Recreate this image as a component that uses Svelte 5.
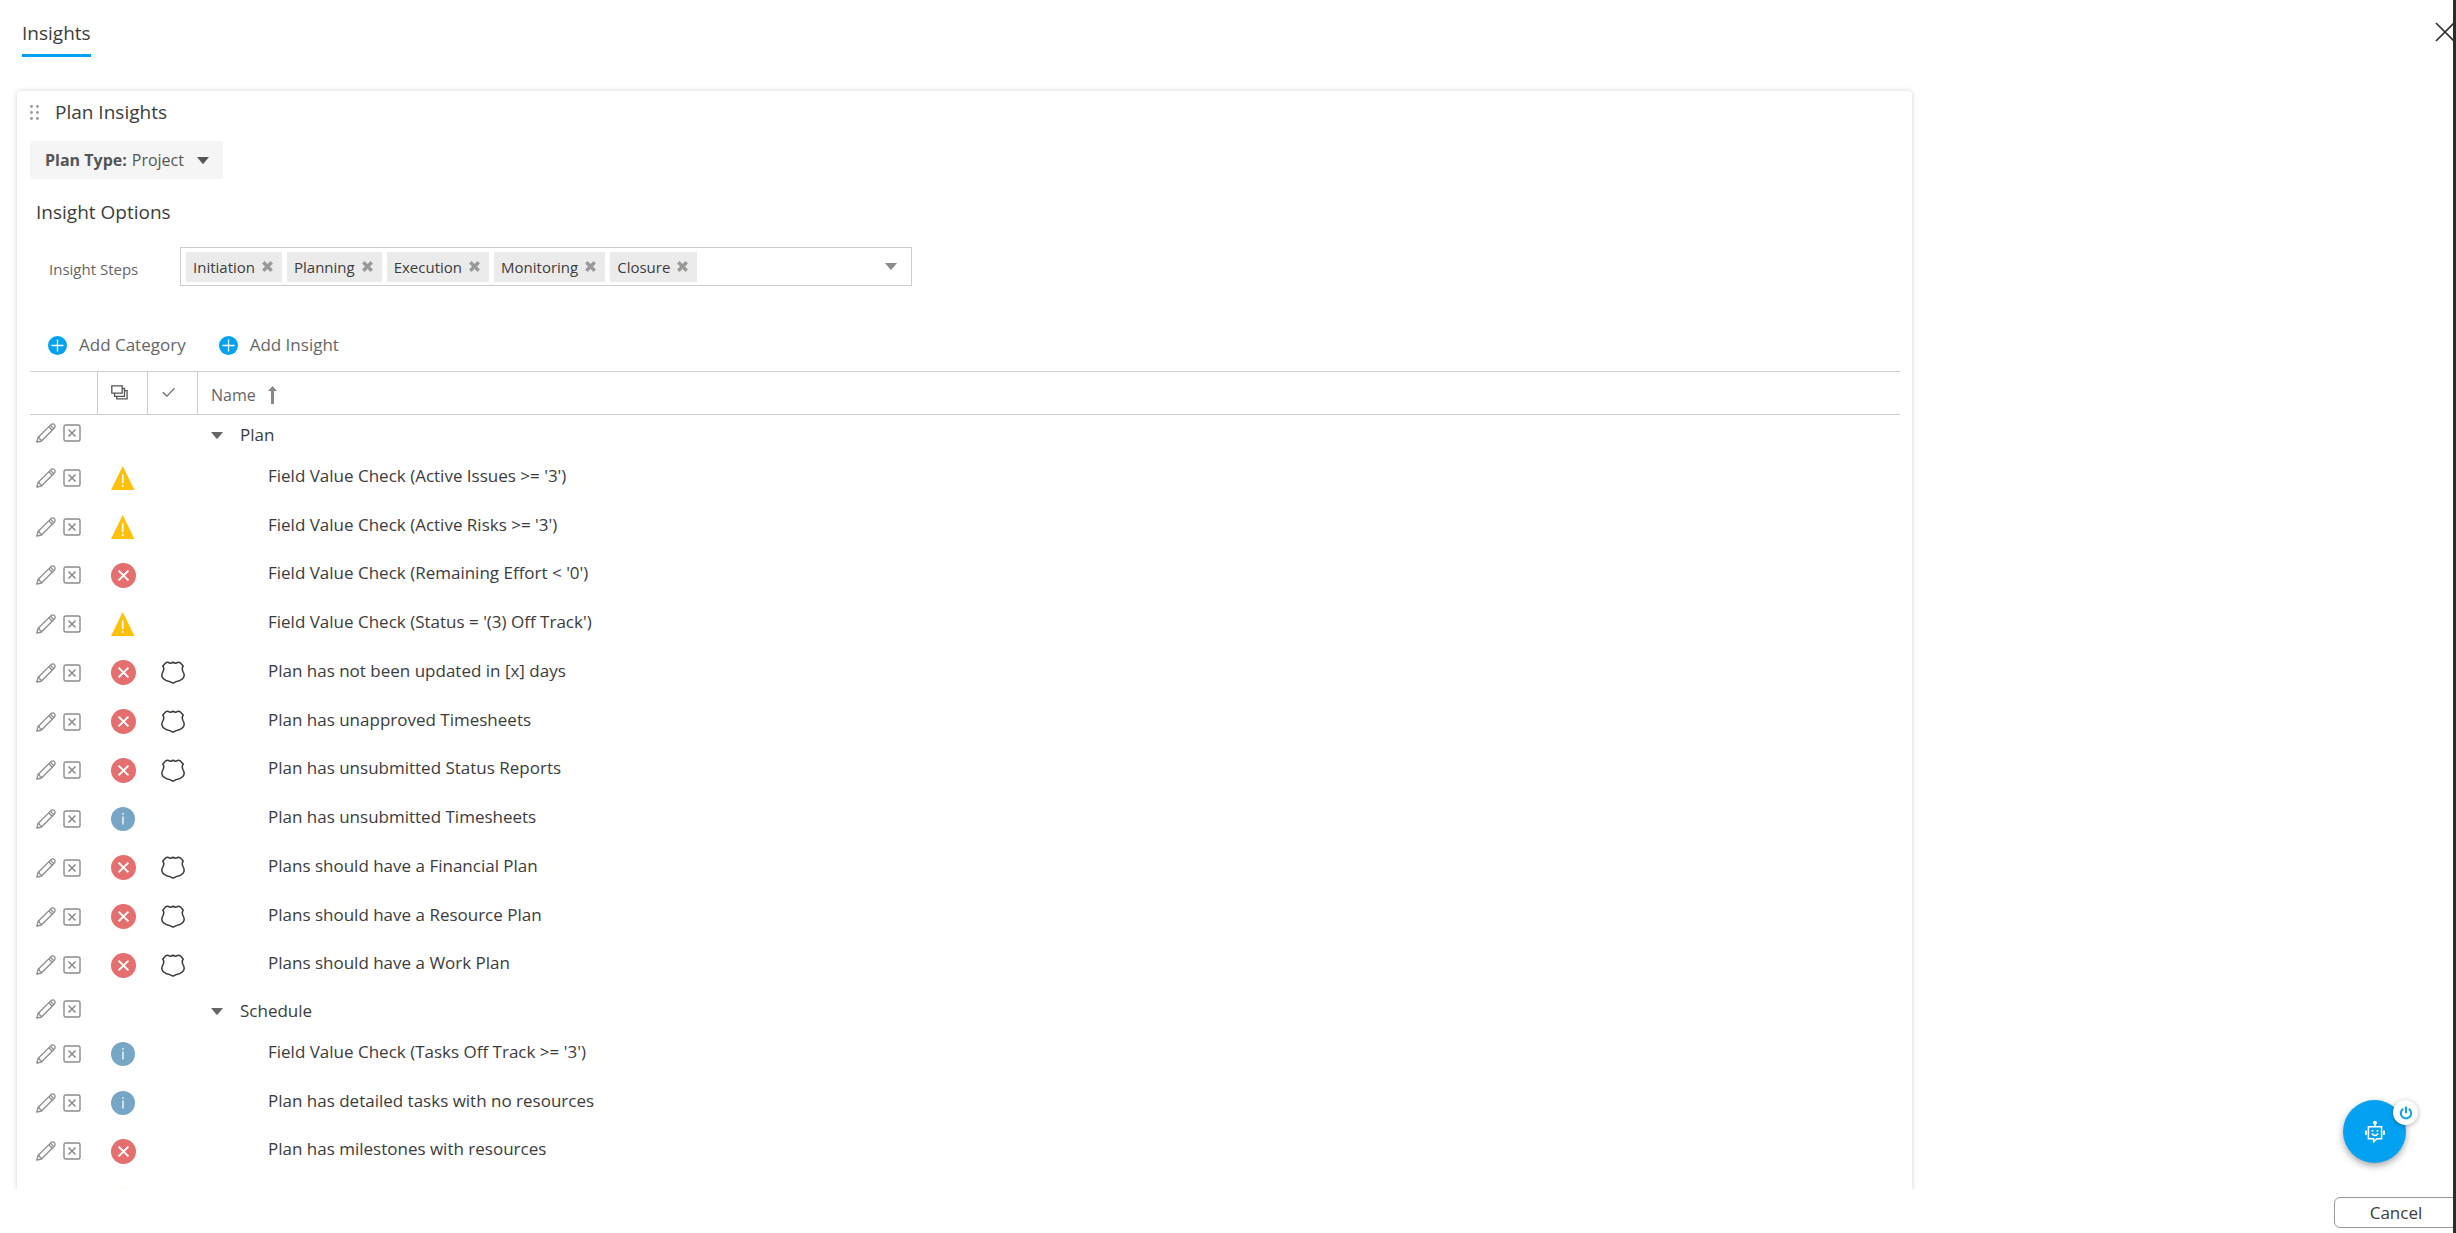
<script>
  let steps = $state(['Initiation', 'Planning', 'Execution', 'Monitoring', 'Closure']);

  const groups = [
    {
      name: 'Plan',
      rows: [
        { name: "Field Value Check (Active Issues >= '3')", level: 'warning' },
        { name: "Field Value Check (Active Risks >= '3')", level: 'warning' },
        { name: "Field Value Check (Remaining Effort < '0')", level: 'error' },
        { name: "Field Value Check (Status = '(3) Off Track')", level: 'warning' },
        { name: 'Plan has not been updated in [x] days', level: 'error', shield: true },
        { name: 'Plan has unapproved Timesheets', level: 'error', shield: true },
        { name: 'Plan has unsubmitted Status Reports', level: 'error', shield: true },
        { name: 'Plan has unsubmitted Timesheets', level: 'info' },
        { name: 'Plans should have a Financial Plan', level: 'error', shield: true },
        { name: 'Plans should have a Resource Plan', level: 'error', shield: true },
        { name: 'Plans should have a Work Plan', level: 'error', shield: true }
      ]
    },
    {
      name: 'Schedule',
      rows: [
        { name: "Field Value Check (Tasks Off Track >= '3')", level: 'info' },
        { name: 'Plan has detailed tasks with no resources', level: 'info' },
        { name: 'Plan has milestones with resources', level: 'error' },
        { name: '', level: 'warning' }
      ]
    }
  ];

  function removeStep(step) {
    steps = steps.filter((s) => s !== step);
  }
</script>

{#snippet plus()}
  <svg class="plus" viewBox="0 0 19 19" width="19" height="19" aria-hidden="true">
    <circle cx="9.5" cy="9.5" r="9.5" fill="#03a1f1" />
    <path d="M9.5 3.5v12M3.5 9.5h12" stroke="#fff" stroke-width="1.3" />
  </svg>
{/snippet}

{#snippet rowActions(name)}
  <div class="actions">
    <button aria-label="Edit {name}">
      <svg viewBox="0 0 20 20" width="20" height="20" fill="none" stroke="#8c8c8c" stroke-width="1.3" stroke-linejoin="round">
        <path d="M.8 19.2 2 14.5 15 1.6Q16.8.2 18.4 1.6 19.8 3.2 18.4 5L5.5 18 .8 19.2Z" />
        <path d="M2 14.5Q3.4 14.4 3.8 16.2 5.4 16.4 5.5 18M12.8 3.8 16.2 7.2M14.4 2.2 17.8 5.6" />
      </svg>
    </button>
    <button aria-label="Delete {name}">
      <svg viewBox="0 0 18 18" width="18" height="18" fill="none" stroke="#8c8c8c">
        <rect x="1" y="1" width="16" height="16" rx="1.8" stroke-width="1.4" />
        <path d="M5.5 5.5l7 7M12.5 5.5l-7 7" stroke-width="1.6" />
      </svg>
    </button>
  </div>
{/snippet}

{#snippet levelIcon(level)}
  {#if level === 'warning'}
    <svg viewBox="0 0 24 24" width="24" height="24" role="img" aria-label="Warning">
      <path d="M11.7 0 23.5 24H0Z" fill="#ffc107" />
      <path d="M11.7 8.5v8.8M11.7 19v2" stroke="#fff" stroke-width="1.6" />
    </svg>
  {:else if level === 'error'}
    <svg viewBox="0 0 25 25" width="25" height="25" role="img" aria-label="Error">
      <circle cx="12.5" cy="12.5" r="12.5" fill="#e56e6e" />
      <path d="M7.6 7.6l9.8 9.8M17.4 7.6l-9.8 9.8" stroke="#fff" stroke-width="2" />
    </svg>
  {:else}
    <svg viewBox="0 0 24 24" width="24" height="24" role="img" aria-label="Information">
      <circle cx="12" cy="12" r="12" fill="#76a5c6" />
      <path d="M12 9.6v8M12 6v1.8" stroke="#fff" stroke-width="1.3" />
    </svg>
  {/if}
{/snippet}

<div class="page">
  <header class="top">
    <nav><a class="tab" href="#insights">Insights</a></nav>
    <button class="close" aria-label="Close">
      <svg viewBox="0 0 20 20" width="20" height="20"><path d="M1 1l18 18M19 1 1 19" stroke="#333" stroke-width="1.7" /></svg>
    </button>
  </header>

  <main>
    <section class="card">
      <div class="title">
        <svg viewBox="0 0 9 15" width="9" height="15" fill="#999" aria-hidden="true">
          {#each [1.5, 7.5] as x}
            {#each [1.5, 7.5, 13.5] as y}<circle cx={x} cy={y} r="1.4" />{/each}
          {/each}
        </svg>
        <h1>Plan Insights</h1>
      </div>

      <label class="plan-type">
        <b>Plan Type:</b>
        <select><option>Project</option></select>
        <svg viewBox="0 0 12 7" width="12" height="7" aria-hidden="true"><path d="M0 0h12L6.6 6.6Q6 7 5.4 6.6Z" fill="#555" /></svg>
      </label>

      <h2>Insight Options</h2>

      <div class="field">
        <label for="steps">Insight Steps</label>
        <div class="picker">
          {#each steps as step}
            <span class="chip">
              {step}
              <button aria-label="Remove {step}" onclick={() => removeStep(step)}>
                <svg viewBox="0 0 11 11" width="11" height="11"><path d="M2.5 2.5l6 6M8.5 2.5l-6 6" stroke="#999" stroke-width="3.4" stroke-linecap="square" /></svg>
              </button>
            </span>
          {/each}
          <input id="steps" type="text" />
          <button class="open" aria-label="Show steps">
            <svg viewBox="0 0 12 7" width="12" height="7"><path d="M0 0h12L6.6 6.6Q6 7 5.4 6.6Z" fill="#8c8c8c" /></svg>
          </button>
        </div>
      </div>

      <div class="tools">
        <button>{@render plus()}Add Category</button>
        <button>{@render plus()}Add Insight</button>
      </div>

      <table>
        <colgroup><col class="c-act" /><col class="c-icon" /><col class="c-icon" /><col /></colgroup>
        <thead>
          <tr>
            <th aria-label="Actions"></th>
            <th aria-label="Severity">
              <svg viewBox="0 0 17 15" width="17" height="15" fill="#fff" stroke="#555" stroke-width="1.3">
                <path d="M5.7 5.7h10.4v8.2H5.7z" />
                <path d="M3.5 3.5h10v7.8h-10z" />
                <path d="M.8.8h10.4v7.4H.8z" />
              </svg>
            </th>
            <th aria-label="Required">
              <svg viewBox="0 0 15 15" width="15" height="15" fill="none"><path d="M1.8 7.2l4.2 4L13.5 3.2" stroke="#666" stroke-width="1.2" /></svg>
            </th>
            <th class="name">
              <span>Name
                <svg viewBox="0 0 9 18" width="9" height="18" aria-hidden="true"><path d="M4.5 0 9 5H6v13H3V5H0Z" fill="#888" /></svg>
              </span>
            </th>
          </tr>
        </thead>
        {#each groups as group}
          <tbody>
            <tr class="group">
              <td>{@render rowActions(group.name)}</td>
              <td></td>
              <td></td>
              <td>
                <button class="toggle" aria-expanded="true">
                  <svg viewBox="0 0 12 7" width="12" height="7" aria-hidden="true"><path d="M0 0h12L6.6 6.6Q6 7 5.4 6.6Z" fill="#666" /></svg>
                  {group.name}
                </button>
              </td>
            </tr>
            {#each group.rows as row}
              <tr class="leaf">
                <td>{@render rowActions(row.name)}</td>
                <td class="mark">{@render levelIcon(row.level)}</td>
                <td class="mark">
                  {#if row.shield}
                    <svg viewBox="0 0 24 23" width="24" height="23" role="img" aria-label="Required" fill="none" stroke="#3a3a3a" stroke-width="1.5" stroke-linejoin="round">
                      <path d="M12 1.2Q9.8 3 7.4 1.5 6 .8 4.8 1.8L1.8 5Q3.6 7.6 2 10.6.6 12.8.9 15 1.4 18 5 19.4 9 20.2 12 22.2 15 20.2 19 19.4 22.6 18 23.1 15 23.4 12.8 22 10.6 20.4 7.6 22.2 5L19.2 1.8Q18 .8 16.6 1.5 14.2 3 12 1.2Z" />
                    </svg>
                  {/if}
                </td>
                <td class="label">{row.name}</td>
              </tr>
            {/each}
          </tbody>
        {/each}
      </table>
    </section>
  </main>

  <footer><button class="cancel">Cancel</button></footer>

  <div class="bot">
    <button class="bot-main" aria-label="Open assistant">
      <svg viewBox="0 0 20 22" width="20" height="22" fill="none" stroke="#fff" stroke-width="1.5">
        <path d="M3.4 5.8h13.2v12H12l-3.4 3v-3H3.4zM10 5.8V2" />
        <path d="M1 9.5v4.5M19 9.5v4.5" stroke-width="1.8" />
        <circle cx="10" cy="1.8" r="1.2" fill="#fff" />
        <path d="M6.8 12.6q3.2 3.8 6.4 0" />
        <path d="M6.6 9.8h1.8M11.6 9.8h1.8" />
      </svg>
    </button>
    <button class="bot-power" aria-label="Turn assistant off">
      <svg viewBox="0 0 14 14" width="14" height="14" fill="none" stroke="#03a1f1" stroke-width="1.9">
        <path d="M4.2 2.9a5.2 5.2 0 1 0 5.6 0M7 .4v6.8" />
      </svg>
    </button>
  </div>
</div>

<style>
  :global(body) { overflow: hidden; }
  .page {
    position: relative;
    box-sizing: border-box;
    height: 100vh;
    display: flex;
    flex-direction: column;
    overflow: hidden;
    border-right: 3px solid #2a2c2d;
    background: #fff;
    color: #3c3c3c;
    font: 17px/24px "Open Sans", "Noto Sans", sans-serif;
  }
  button, input, select { font: inherit; color: inherit; }
  button { border: 0; padding: 0; background: none; cursor: pointer; }
  svg { display: block; flex: none; }

  .top { display: flex; justify-content: space-between; align-items: flex-start; height: 80px; flex: none; padding-left: 22px; }
  .tab { display: block; padding: 21px 0 9px; border-bottom: 3px solid #03a1f1; color: inherit; font-size: 19px; text-decoration: none; }
  .close { margin: 22px -2px 0 0; }

  main { flex: 1; min-height: 0; overflow: hidden; padding: 11px 6px 0 17px; }
  .card { box-sizing: border-box; width: 78%; padding: 9px 12px 0 13px; border-radius: 4px; box-shadow: 0 0 5px rgba(0, 0, 0, 0.18); }

  .title { display: flex; align-items: center; gap: 16px; }
  h1, h2 { margin: 0; font-size: 19px; font-weight: 400; }

  .plan-type { display: inline-flex; align-items: center; box-sizing: border-box; height: 38px; margin-top: 17px; padding: 0 14px 0 15px; background: #f5f5f5; color: #555; font-size: 16px; }
  .plan-type b { margin-right: 5px; }
  .plan-type select { appearance: none; border: 0; padding: 0; margin-right: 12px; background: none; }

  h2 { margin: 21px 0 0 6px; }

  .field { display: flex; align-items: center; margin-top: 23px; font-size: 15px; }
  .field label { width: 131px; padding: 4px 0 0 19px; color: #666; }
  .picker { flex: 0 1 732px; min-width: 0; box-sizing: border-box; height: 39px; display: flex; align-items: center; gap: 5px; padding: 0 14px 0 5px; border: 1px solid #ccc; }
  .chip { display: flex; align-items: center; gap: 7px; height: 30px; padding: 0 9px 0 7px; background: #ebebeb; }
  .picker input { flex: 1; width: 0; min-width: 0; border: 0; padding: 0; outline: 0; background: none; }

  .tools { display: flex; gap: 33px; margin: 47px 0 0 18px; }
  .tools button { display: flex; align-items: center; gap: 12px; height: 24px; color: #666; }

  table { width: 100%; margin-top: 14px; table-layout: fixed; border-collapse: separate; border-spacing: 0; }
  .c-act { width: 68px; }
  .c-icon { width: 50px; }
  th { box-sizing: border-box; height: 44px; padding: 0 0 2px 13px; border: solid #ccc; border-width: 1px 1px 1px 0; font-weight: 400; font-size: 16px; text-align: left; color: #666; }
  th.name { border-right: 0; padding-bottom: 0; }
  th span { display: flex; align-items: center; gap: 12px; padding-top: 3px; }
  td { box-sizing: border-box; padding: 0; vertical-align: middle; }

  .actions { display: flex; align-items: center; gap: 7px; padding-left: 6px; }
  .leaf td { height: 49px; }
  .leaf:nth-child(4n) td { height: 48px; }
  .leaf .actions { padding-top: 4px; }
  .mark { padding: 4px 0 0 13px; }
  .label { padding-left: 70px; }

  .group td { height: 40px; vertical-align: bottom; }
  tbody:nth-of-type(1) .group td { height: 36px; }
  .group .actions { padding-bottom: 8px; }
  .toggle { display: flex; align-items: center; gap: 17px; padding: 0 0 4px 13px; }

  footer { flex: none; display: flex; justify-content: flex-end; padding: 8px 0 5px; }
  .cancel { box-sizing: border-box; width: 124px; height: 31px; margin-right: -5px; border: 1px solid #999; border-radius: 6px; background: #fff; }

  .bot { position: absolute; right: 47px; bottom: 70px; }
  .bot-main { display: grid; place-items: center; width: 63px; height: 63px; border-radius: 50%; background: #03a1f1; box-shadow: 0 3px 7px rgba(0, 0, 0, 0.35); }
  .bot-power { position: absolute; top: 0; right: -12px; display: grid; place-items: center; width: 25px; height: 25px; border-radius: 50%; background: #fff; box-shadow: 0 1px 5px rgba(0, 0, 0, 0.3); }
</style>
